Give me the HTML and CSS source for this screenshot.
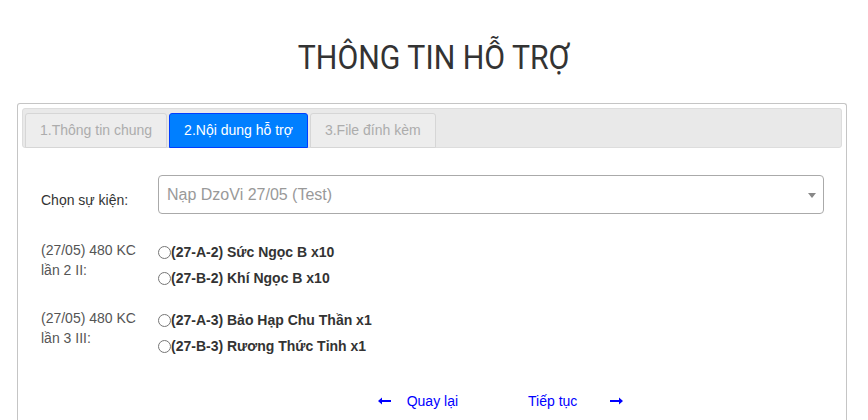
FILE: index.html
```html
<!DOCTYPE html>
<html lang="vi">
<head>
<meta charset="utf-8">
<title>Thông tin hỗ trợ</title>
<link rel="stylesheet" href="styles.css">
</head>
<body>
<h1 class="title"><span class="title-text">THÔNG TIN HỖ TRỢ</span></h1>
<div class="panel">
  <ul class="tabs">
    <li class="tab">1.Thông tin chung</li>
    <li class="tab active">2.Nội dung hỗ trợ</li>
    <li class="tab">3.File đính kèm</li>
  </ul>
  <div class="form">
    <div class="row row-select">
      <label class="lbl lbl-main">Chọn sự kiện:</label>
      <div class="select">
        <span class="select-text">Nạp DzoVi 27/05 (Test)</span>
        <span class="select-arrow"></span>
      </div>
    </div>
    <div class="row group">
      <label class="lbl">(27/05) 480 KC lần 2 II:</label>
      <div class="options">
        <label class="opt"><input type="radio" name="g1">(27-A-2) Sức Ngọc B x10</label>
        <label class="opt"><input type="radio" name="g1">(27-B-2) Khí Ngọc B x10</label>
      </div>
    </div>
    <div class="row group">
      <label class="lbl">(27/05) 480 KC lần 3 III:</label>
      <div class="options">
        <label class="opt"><input type="radio" name="g2">(27-A-3) Bảo Hạp Chu Thần x1</label>
        <label class="opt"><input type="radio" name="g2">(27-B-3) Rương Thức Tỉnh x1</label>
      </div>
    </div>
    <div class="row nav-row">
      <div></div>
      <div class="nav">
        <a class="nav-link back" href="#"><svg class="arrow" width="13" height="8" viewBox="0 0 13 8"><path d="M0 4 L4 0.5 L4 3 L13 3 L13 5 L4 5 L4 7.5 Z" fill="#0000ff"/></svg><span>Quay lại</span></a>
        <a class="nav-link next" href="#"><span>Tiếp tục</span><svg class="arrow" width="13" height="8" viewBox="0 0 13 8"><path d="M13 4 L9 0.5 L9 3 L0 3 L0 5 L9 5 L9 7.5 Z" fill="#0000ff"/></svg></a>
      </div>
    </div>
  </div>
</div>
</body>
</html>
```
FILE: styles.css
```css
html, body {
  margin: 0;
  padding: 0;
  background: #fff;
}
body {
  font-family: Arial, "Liberation Sans", sans-serif;
  font-size: 14px;
  color: #333;
}
.title {
  font-family: Roboto, "Noto Sans", sans-serif;
  font-weight: 400;
  font-size: 34px;
  line-height: 40px;
  color: #333;
  text-align: center;
  margin: 0;
  padding: 37px 0 26px;
}
.title-text {
  display: inline-block;
  transform: scaleX(0.89);
}
.panel {
  margin-left: 17px;
  width: 830px;
  box-sizing: border-box;
  border: 1px solid #c5c5c5;
  border-bottom: none;
  border-radius: 3px 3px 0 0;
  padding: 4px 4px 0;
  height: 317px;
}
.tabs {
  list-style: none;
  margin: 0;
  display: flex;
  gap: 2px;
  padding: 4px 2px 0;
  background: #e9e9e9;
  border: 1px solid #dddddd;
  border-radius: 3px;
  height: 34px;
}
.tab {
  box-sizing: border-box;
  height: 35px;
  margin-bottom: -1px;
  padding: 0 14px;
  line-height: 32px;
  border: 1px solid #d6d6d6;
  border-radius: 3px 3px 0 0;
  background: #ededed;
  color: #acacac;
  white-space: nowrap;
}
.tab.active {
  background: #007fff;
  border-color: #003eff;
  color: #fff;
}
.form {
  padding: 27px 18px 0 19px;
}
.row {
  display: grid;
  grid-template-columns: 117px 1fr;
}
.lbl {
  padding-right: 14px;
  line-height: 20px;
  color: #555;
}
.lbl-main {
  color: #333;
  padding-top: 15px;
}
.select {
  position: relative;
  height: 39px;
  box-sizing: border-box;
  border: 1px solid #aaaaaa;
  border-radius: 4px;
  padding-left: 8px;
  display: flex;
  align-items: center;
  font-size: 16px;
  color: #999;
}
.select-arrow {
  position: absolute;
  right: 7px;
  top: 17px;
  width: 0;
  height: 0;
  border-left: 4px solid transparent;
  border-right: 4px solid transparent;
  border-top: 5px solid #888;
}
.group {
  margin-top: 26px;
}
.group + .group {
  margin-top: 17px;
}
.options {
  display: flex;
  flex-direction: column;
}
.opt {
  display: flex;
  align-items: center;
  height: 26px;
  font-weight: bold;
  font-size: 14px;
  color: #333;
  margin-top: -1px;
}
.opt + .opt {
  margin-top: 0;
}
.opt input {
  margin: 0;
  width: 13px;
  height: 13px;
}
.nav-row {
  margin-top: 32px;
}
.nav {
  display: flex;
  justify-content: center;
  padding-left: 19px;
  gap: 70px;
  line-height: 20px;
}
.nav-link {
  display: flex;
  align-items: center;
  color: #0000ff;
  text-decoration: none;
}
.back .arrow {
  margin-right: 16px;
}
.next .arrow {
  margin-left: 33px;
}
```
